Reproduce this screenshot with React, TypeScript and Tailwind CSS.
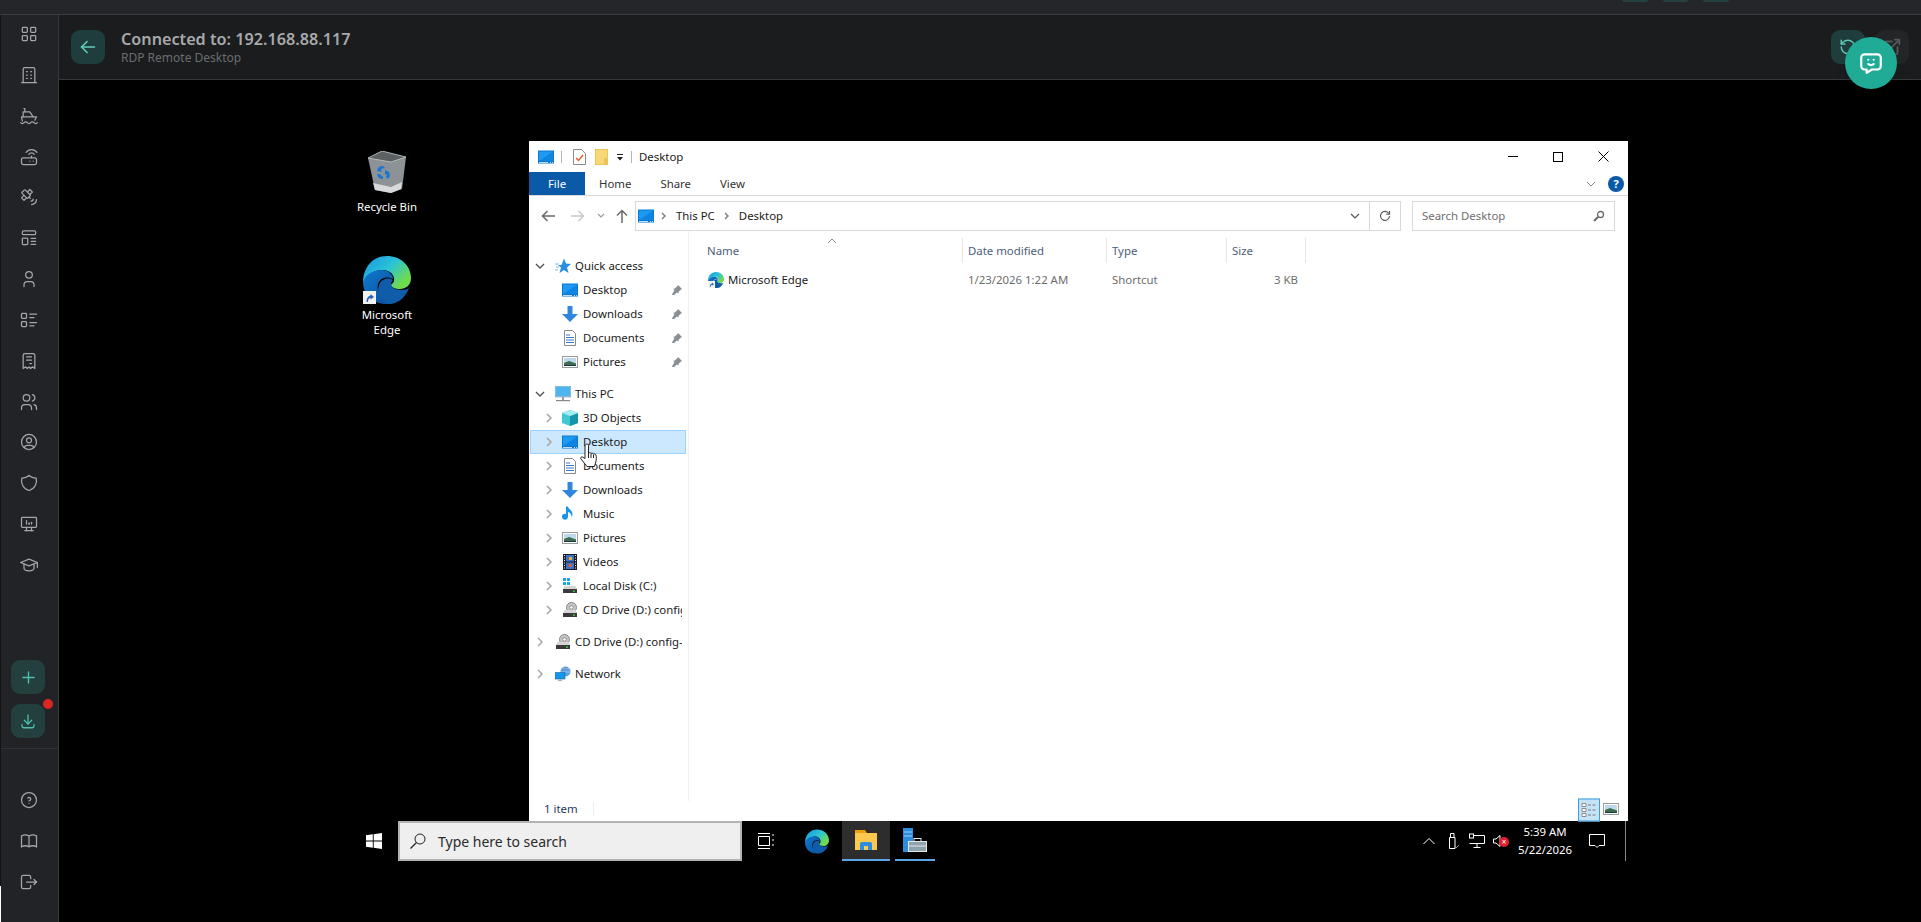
import { RotateCcw } from "lucide-react";
import {
  TbArrowLeft,
  TbBook,
  TbBuilding,
  TbDeviceDesktopAnalytics,
  TbDownload,
  TbExternalLink,
  TbHelpCircle,
  TbLayoutGrid,
  TbListDetails,
  TbLogout,
  TbMessageChatbot,
  TbPlus,
  TbReceipt,
  TbRouter,
  TbSatellite,
  TbSchool,
  TbShield,
  TbShip,
  TbUser,
  TbUserCircle,
  TbUsers,
} from "react-icons/tb";

const win = "font-['Noto_Sans','Open_Sans',sans-serif]";

function LayoutIcon({ size, strokeWidth }: { size?: number; strokeWidth?: number }) {
  return (
    <svg
      viewBox="0 0 24 24"
      width={size}
      height={size}
      fill="none"
      stroke="currentColor"
      strokeWidth={strokeWidth}
      strokeLinecap="round"
      strokeLinejoin="round"
    >
      <rect x="4" y="3.500" width="16" height="4.500" rx="1.500" />
      <rect x="4" y="12" width="6.500" height="8" rx="1" />
      <path d="M14.500 12.500h5.500M14.500 16h5.500M14.500 19.500h5.500" />
    </svg>
  );
}

const navIcons = [
  TbLayoutGrid,
  TbBuilding,
  TbShip,
  TbRouter,
  TbSatellite,
  LayoutIcon,
  TbUser,
  TbListDetails,
  TbReceipt,
  TbUsers,
  TbUserCircle,
  TbShield,
  TbDeviceDesktopAnalytics,
  TbSchool,
];

function MonitorIcon({ className = "w-4 h-4" }: { className?: string }) {
  return (
    <svg viewBox="0 0 16 13" className={className}>
      <rect x="0" y="0" width="16" height="13" fill="#0a78d7" />
      <path d="M1 1h14v9.500H1z" fill="#1e9bf0" />
      <path d="M1 10.500 15 1v9.500z" fill="#0f84e3" />
      <path d="M1 11.500h9v.7H1zM12 11.500h1v.7h-1zM14 11.500h1v.7h-1z" fill="#fff" />
    </svg>
  );
}

function DownArrowIcon() {
  return (
    <svg viewBox="0 0 16 16" className="w-4 h-4">
      <path d="M5.500 0h5v8H16l-8 8-8-8h5.500z" fill="#2f86dc" />
    </svg>
  );
}

function DocIcon() {
  return (
    <svg viewBox="0 0 16 16" className="w-4 h-4">
      <path d="M2.500.5h8l3 3v12h-11z" fill="#fff" stroke="#8a8a8a" />
      <path d="M4 5h4M4 7.500h8M4 10h8M4 12.500h8" stroke="#3a7bc8" />
    </svg>
  );
}

function PictureIcon() {
  return (
    <svg viewBox="0 0 16 14" className="w-4 h-[14px]">
      <rect x="0.5" y="1.500" width="15" height="11" fill="#fff" stroke="#9a9a9a" />
      <rect x="2" y="3" width="12" height="8" fill="#bcd9ef" />
      <path d="M2 8 7 6l7 2.500V11H2z" fill="#3f6b4c" />
      <path d="M2 10h12v1H2z" fill="#1e3a4a" />
    </svg>
  );
}

function CubeIcon() {
  return (
    <svg viewBox="0 0 16 16" className="w-4 h-4">
      <path d="M8 0 16 3v10l-8 3-8-3V3z" fill="#41c6d3" />
      <path d="M8 6v10l8-3V3z" fill="#1795a8" />
      <path d="M8 0 16 3 8 6 0 3z" fill="#a5ecef" />
    </svg>
  );
}

function NoteIcon() {
  return (
    <svg viewBox="0 0 16 16" className="w-4 h-4">
      <path d="M6 .5v10.200a3 3 0 1 1-2-2.800V.5z" fill="#1795ea" />
      <path d="M6 .5c.3 3 4.500 3.500 4.500 7.500 0 1.500-.5 2.500-1 3 .2-2.500-1.500-4.500-3.500-5z" fill="#1795ea" />
    </svg>
  );
}

function FilmIcon() {
  return (
    <svg viewBox="0 0 16 16" className="w-4 h-4">
      <rect x="1" y="0" width="14" height="16" fill="#1b1b2a" />
      <rect x="4" y="1" width="8" height="6.500" fill="#3f72c4" />
      <rect x="4" y="8.500" width="8" height="6.500" fill="#3f72c4" />
      <rect x="7" y="3" width="3" height="3" fill="#e5b13a" />
      <rect x="7" y="10" width="3" height="3" fill="#d3643a" />
      <path d="M2 1.500h1M2 4h1M2 6.500h1M2 9h1M2 11.500h1M2 14h1M13 1.500h1M13 4h1M13 6.500h1M13 9h1M13 11.500h1M13 14h1" stroke="#e8e8e8" />
    </svg>
  );
}

function DiskIcon({ cd }: { cd?: boolean }) {
  return (
    <svg viewBox="0 0 16 16" className="w-4 h-4">
      {cd ? (
        <>
          <circle cx="9.500" cy="5.500" r="5" fill="#c5c5c5" stroke="#8a8a8a" />
          <circle cx="9.500" cy="5.500" r="1.800" fill="#fff" stroke="#8a8a8a" />
        </>
      ) : (
        <>
          <rect x="1" y="0" width="3" height="3" fill="#18a8ee" />
          <rect x="5" y="0" width="3" height="3" fill="#18a8ee" />
          <rect x="1" y="4" width="3" height="3" fill="#18a8ee" />
          <rect x="5" y="4" width="3" height="3" fill="#18a8ee" />
        </>
      )}
      <path d="M2.500 8h11L15 11H1z" fill="#d5d5d5" />
      <rect x="1" y="11" width="14" height="4" fill="#3a3a3a" />
      <rect x="11" y="12.500" width="2" height="1.200" fill="#3fe04b" />
    </svg>
  );
}

function PcIcon() {
  return (
    <svg viewBox="0 0 16 16" className="w-4 h-4">
      <rect x="0" y="0" width="16" height="11" fill="#8fd3f7" stroke="#6f8ea3" strokeWidth="0.6" />
      <path d="M1 1h14v9L1 10z" fill="#4fb4ee" />
      <rect x="7" y="11" width="2" height="3" fill="#999" />
      <rect x="1" y="14" width="14" height="1.200" fill="#888" />
    </svg>
  );
}

function StarIcon() {
  return (
    <svg viewBox="0 0 16 16" className="w-4 h-4">
      <path d="M9 0.500 11 5.500 16 6 12 9.500 13.500 15 9 12 4.500 15 6 9.500 3 7h3.500z" fill="#2a8de0" />
      <path d="M0 6h4M1 9h3M0 12h3" stroke="#7ab9ec" />
    </svg>
  );
}

function NetworkIcon() {
  return (
    <svg viewBox="0 0 16 16" className="w-4 h-4">
      <circle cx="10.500" cy="5.500" r="5" fill="#5f9fdb" />
      <path d="M8 1.500c2 1 4 1 6 1M6 6h9" stroke="#d3e6f6" strokeWidth="0.6" />
      <rect x="0" y="6.500" width="10" height="6.500" fill="#1795ea" stroke="#0a6cbc" strokeWidth="0.6" />
      <rect x="3" y="13.500" width="4" height="1.500" fill="#aaa" />
    </svg>
  );
}

function EdgeLogo({ className }: { className: string }) {
  return (
    <svg viewBox="0 0 48 48" className={className}>
      <defs>
        <linearGradient id="edgeA" x1="0.1" y1="0.1" x2="0.9" y2="0.7">
          <stop offset="0" stopColor="#1a9fe0" />
          <stop offset="0.5" stopColor="#2cc3d6" />
          <stop offset="1" stopColor="#6edb4f" />
        </linearGradient>
        <linearGradient id="edgeB" x1="0" y1="0" x2="1" y2="1">
          <stop offset="0" stopColor="#0f7bd0" />
          <stop offset="1" stopColor="#0c4a96" />
        </linearGradient>
      </defs>
      <path d="M24 0C37 0 48 9 48 22c0 7-5 11-11 11-5 0-9-2-9-4 0-1 2-1 3-4 1-6-4-11-11-11C10 14 2 20 0 27 0 11 10 0 24 0z" fill="url(#edgeA)" />
      <path d="M0 26c2-7 9-12 19-12 6 0 11 4 11 9-5-3-13-2-15 5-2 8 4 17 14 20C9 50 0 38 0 26z" fill="url(#edgeB)" />
      <path d="M16 29c2-6 9-8 14-5-1 1-2 2-2 4 0 3 5 6 11 6 3 0 6-1 7-2-3 9-11 16-20 16-8-2-13-11-10-19z" fill="#0f5cab" />
    </svg>
  );
}

function ShortcutBadge({ className }: { className: string }) {
  return (
    <svg viewBox="0 0 13 13" className={className}>
      <rect width="13" height="13" fill="#f2f2f2" />
      <path d="M3.500 11c0-4 1.500-6 4-6.500V3L11 6 7.500 8.500V7C6 7 5 8.500 5 11z" fill="#2a64b4" />
    </svg>
  );
}

function RecycleBin() {
  return (
    <svg viewBox="0 0 38 42" className="w-[38px] h-[42px]">
      <path d="M0 7 14 0 38 6l-4 32-11 4-16-3z" fill="#8d9296" />
      <path d="M0 7 14 0 38 6 23 11z" fill="#5d6164" stroke="#c3c6c8" strokeWidth="0.8" />
      <path d="M5 32 23 36 34 31l-1 7-10 4-16-3z" fill="#d7d9da" />
      <path d="M9 20a6 6 0 0 1 6-5l2 2-4 1 1 3zM17 19l4 2a6 6 0 0 1-1 7l-2-2 1-3-2 1zM15 28a6 6 0 0 1-6-5l3 0 2 3 1-2z" fill="#1877d4" />
    </svg>
  );
}

function NavRow({
  icon,
  label,
  child,
  open,
  pin,
  active,
}: {
  icon: React.ReactNode;
  label: string;
  child?: boolean;
  open?: boolean;
  pin?: boolean;
  active?: boolean;
}) {
  return (
    <div
      className={`flex h-6 items-center pr-[3px] border ${
        active ? "bg-[#cce8ff] border-[#99d1ff]" : "border-transparent"
      } ${child ? "pl-[12px]" : "pl-[3px]"}`}
    >
      <span className="flex w-[12px] shrink-0 justify-center">
        {open === true && (
          <svg viewBox="0 0 10 10" className="w-[10px] h-[10px]">
            <path d="M1 3l4 4 4-4" fill="none" stroke="#5a5a5a" strokeWidth="1.500" />
          </svg>
        )}
        {open === false && (
          <svg viewBox="0 0 10 10" className="w-[10px] h-[10px]">
            <path d="M3 1l4 4-4 4" fill="none" stroke="#a6a6a6" strokeWidth="1.500" />
          </svg>
        )}
      </span>
      <span className={`flex w-4 shrink-0 justify-center ${child ? "ml-[7px]" : "ml-[9px]"}`}>{icon}</span>
      <span
        className={`flex-1 overflow-hidden whitespace-nowrap text-[11.4px] leading-[16px] text-[#1a1a1a] ${
          child ? "ml-[5px]" : "ml-[4px]"
        }`}
      >
        {label}
      </span>
      {pin && (
        <svg viewBox="0 0 10 10" className="w-[10px] h-[10px] shrink-0">
          <path d="M6 0l4 4-1 .6-2.200 2-.2 2L5 7.500 2 10l-2 0 0-.5L2.500 5 1 3.800l2-.2L5.400 1z" fill="#8a8f93" />
        </svg>
      )}
    </div>
  );
}

export default function App() {
  return (
    <div className="flex h-[922px] w-[1921px] flex-col overflow-hidden bg-black font-['Noto_Sans',sans-serif]">
      {/* top bar, almost scrolled away */}
      <div className="flex h-[15px] shrink-0 justify-end gap-[15px] border-b border-[#3a3c40] bg-[#24262a] pr-[192px]">
        <span className="h-[2px] w-[26px] rounded-b-md bg-[#24403f]" />
        <span className="h-[2px] w-[25px] rounded-b-md bg-[#24403f]" />
        <span className="h-[2px] w-[26px] rounded-b-md bg-[#24403f]" />
      </div>

      <div className="flex min-h-0 flex-1">
        <aside className="relative flex w-[59px] shrink-0 flex-col border-l border-l-[#111214] border-r border-r-[#36383c] bg-[#212327] text-[#a5a6a8]">
          <span className="absolute -left-px bottom-0 h-[36px] w-px bg-white" />
          <div className="flex flex-col gap-[20.85px] pt-[9px] pl-[18px]">
            {navIcons.map((Icon, i) => (
              <Icon key={i} size={20} strokeWidth={1.5} className="shrink-0" />
            ))}
          </div>
          <div className="mt-auto flex flex-col gap-[10px] pl-[10px]">
            <button className="flex h-[34px] w-[34px] items-center justify-center rounded-[9px] bg-[#233f3e] text-[#4fc0aa]">
              <TbPlus size={19} strokeWidth={1.75} />
            </button>
            <button className="relative flex h-[34px] w-[34px] items-center justify-center rounded-[9px] bg-[#233f3e] text-[#4fc0aa]">
              <TbDownload size={18} strokeWidth={1.75} />
              <span className="absolute -right-[8px] -top-[5px] h-[10px] w-[10px] rounded-full bg-[#dc2626]" />
            </button>
          </div>
          <div className="mt-[10px] flex flex-col gap-[20.8px] border-t border-[#303236] pt-[41px] pb-[30px] pl-[18px]">
            <TbHelpCircle size={20} strokeWidth={1.5} />
            <TbBook size={20} strokeWidth={1.5} />
            <TbLogout size={20} strokeWidth={1.5} />
          </div>
        </aside>

        <main className="flex min-w-0 flex-1 flex-col">
          <header className="flex h-[65px] shrink-0 items-center border-b border-[#36383c] bg-[#1a1c1e] pl-[12px] pr-[12px]">
            <button className="flex h-[34px] w-[34px] items-center justify-center rounded-[9px] bg-[#1f3d3c] text-[#5fd0bd]">
              <TbArrowLeft size={22} strokeWidth={1.75} />
            </button>
            <div className="ml-[16px]">
              <div className="text-[16.2px] font-semibold leading-[22px] text-[#a8a9ab]">
                Connected to: 192.168.88.117
              </div>
              <div className="text-[12px] leading-[16px] text-[#6a6c6f]">RDP Remote Desktop</div>
            </div>
            <div className="ml-auto flex gap-[10px]">
              <button className="flex h-[34px] w-[34px] items-center justify-center rounded-[9px] bg-[#1f3d3c] text-[#5cc4b0]">
                <RotateCcw size={18} />
              </button>
              <button className="flex h-[34px] w-[34px] items-center justify-center rounded-[9px] bg-[#232527] text-[#55575a]">
                <TbExternalLink size={22} />
              </button>
            </div>
          </header>

          {/* remote desktop canvas */}
          <div className={`relative min-h-0 flex-1 bg-black ${win}`}>
            <div className="absolute left-[296px] top-[71px] flex w-[64px] flex-col items-center text-center text-[11.4px] leading-[15px] text-white">
              <RecycleBin />
              <span className="mt-[6px]">Recycle Bin</span>
            </div>
            <div className="absolute left-[292px] top-[176px] flex w-[72px] flex-col items-center text-center text-[11.4px] leading-[15px] text-white">
              <div className="relative h-[48px] w-[48px]">
                <EdgeLogo className="h-[48px] w-[48px]" />
                <ShortcutBadge className="absolute bottom-0 left-0 h-[13px] w-[13px]" />
              </div>
              <span className="mt-[3px]">
                Microsoft
                <br />
                Edge
              </span>
            </div>

            {/* explorer window */}
            <div className="absolute left-[470px] top-[61px] flex h-[680px] w-[1099px] flex-col bg-white text-[11.4px] text-[#1a1a1a]">
              <div className="flex h-[31px] shrink-0 items-center pl-[9px]">
                <MonitorIcon />
                <span className="ml-[7px] h-[12px] w-px bg-[#b5b5b5]" />
                <svg viewBox="0 0 13 16" className="ml-[11px] h-4 w-[13px]">
                  <path d="M.5.5h8l4 4v11H.5z" fill="#fff" stroke="#8a8a8a" />
                  <path d="M3 9l2.500 2.500L10 6" fill="none" stroke="#e2582a" strokeWidth="1.400" />
                </svg>
                <svg viewBox="0 0 13 16" className="ml-[9px] h-4 w-[13px]">
                  <rect width="13" height="16" fill="#f8d775" stroke="#e0b13f" />
                  <rect x="9" y="9" width="3" height="6" fill="#e8c25c" />
                </svg>
                <svg viewBox="0 0 8 8" className="ml-[8px] h-2 w-2">
                  <path d="M1 1h6v1H1zM1 4h6L4 7.500z" fill="#222" />
                </svg>
                <span className="ml-[7px] h-[12px] w-px bg-[#b5b5b5]" />
                <span className="ml-[7px]">Desktop</span>
                <div className="ml-auto flex items-center pr-[19px]">
                  <span className="h-px w-[10px] bg-black" />
                  <span className="ml-[35px] h-[10px] w-[10px] border border-black" />
                  <svg viewBox="0 0 11 11" className="ml-[35px] h-[11px] w-[11px]">
                    <path d="M.5.5l10 10M10.500.5l-10 10" stroke="#000" />
                  </svg>
                </div>
              </div>

              <div className="flex h-[24px] shrink-0 items-center border-b border-[#d9d9d9]">
                <span className="flex h-[23px] w-[56px] items-center justify-center bg-[#0a5aa8] text-white">
                  File
                </span>
                <span className="ml-[14px] text-[#333]">Home</span>
                <span className="ml-[29px] text-[#333]">Share</span>
                <span className="ml-[29px] text-[#333]">View</span>
                <div className="ml-auto flex items-center pr-[4px]">
                  <svg viewBox="0 0 10 6" className="h-[6px] w-[10px]">
                    <path d="M1 1l4 4 4-4" fill="none" stroke="#8a8a8a" />
                  </svg>
                  <span className="ml-[12px] flex h-4 w-4 items-center justify-center rounded-full bg-[#0a5aa8] text-[11px] font-bold leading-none text-white">
                    ?
                  </span>
                </div>
              </div>

              <div className="mt-[5px] flex h-[30px] shrink-0 items-center pl-[12px] pr-[13px]">
                <svg viewBox="0 0 14 12" className="h-3 w-[14px]">
                  <path d="M14 6H2M6.500 1 1.500 6l5 5" fill="none" stroke="#6a6a6a" strokeWidth="1.500" />
                </svg>
                <svg viewBox="0 0 14 12" className="ml-[16px] h-3 w-[14px]">
                  <path d="M0 6h12M7.500 1l5 5-5 5" fill="none" stroke="#c8c8c8" strokeWidth="1.500" />
                </svg>
                <svg viewBox="0 0 8 6" className="ml-[12px] h-[6px] w-2">
                  <path d="M1 1l3 3 3-3" fill="none" stroke="#9a9a9a" strokeWidth="1.200" />
                </svg>
                <svg viewBox="0 0 12 14" className="ml-[11px] h-[14px] w-3">
                  <path d="M6 14V2M1 6.500 6 1.500l5 5" fill="none" stroke="#6a6a6a" strokeWidth="1.500" />
                </svg>
                <div className="ml-[7px] flex h-[30px] flex-1 items-center border border-[#d9d9d9]">
                  <span className="ml-[2px]">
                    <MonitorIcon />
                  </span>
                  <svg viewBox="0 0 6 8" className="ml-[7px] h-2 w-[6px]">
                    <path d="M1 1l3 3-3 3" fill="none" stroke="#7a7a7a" strokeWidth="1.400" />
                  </svg>
                  <span className="ml-[9px]">This PC</span>
                  <svg viewBox="0 0 6 8" className="ml-[9px] h-2 w-[6px]">
                    <path d="M1 1l3 3-3 3" fill="none" stroke="#7a7a7a" strokeWidth="1.400" />
                  </svg>
                  <span className="ml-[9px]">Desktop</span>
                  <svg viewBox="0 0 10 6" className="ml-auto mr-[9px] h-[6px] w-[10px]">
                    <path d="M1 1l4 4 4-4" fill="none" stroke="#555" strokeWidth="1.200" />
                  </svg>
                  <span className="h-full w-px bg-[#d9d9d9]" />
                  <svg viewBox="0 0 12 12" className="mx-[9px] h-3 w-3">
                    <path d="M9.800 3.500A4.500 4.500 0 1 0 10.500 6" fill="none" stroke="#555" strokeWidth="1.100" />
                    <path d="M10.500 1v3.200H7.300" fill="none" stroke="#555" strokeWidth="1.100" />
                  </svg>
                </div>
                <div className="ml-[11px] flex h-[30px] w-[203px] items-center border border-[#d9d9d9] pl-[9px] pr-[9px] text-[#6d6d6d]">
                  <span>Search Desktop</span>
                  <svg viewBox="0 0 12 12" className="ml-auto h-3 w-3">
                    <circle cx="7.500" cy="4.500" r="3" fill="none" stroke="#6a6a6a" strokeWidth="1.300" />
                    <path d="M5 7l-4 4" stroke="#6a6a6a" strokeWidth="2" />
                  </svg>
                </div>
              </div>

              <div className="flex min-h-0 flex-1">
                <nav className="relative box-content flex w-[156px] shrink-0 flex-col border-r border-r-[#f0f0f0] pl-px pr-[2px] pt-[23px]">
                  <NavRow open icon={<StarIcon />} label="Quick access" />
                  <NavRow child pin icon={<MonitorIcon />} label="Desktop" />
                  <NavRow child pin icon={<DownArrowIcon />} label="Downloads" />
                  <NavRow child pin icon={<DocIcon />} label="Documents" />
                  <NavRow child pin icon={<PictureIcon />} label="Pictures" />
                  <div className="mt-2">
                    <NavRow open icon={<PcIcon />} label="This PC" />
                  </div>
                  <NavRow child open={false} icon={<CubeIcon />} label="3D Objects" />
                  <NavRow child active open={false} icon={<MonitorIcon />} label="Desktop" />
                  <NavRow child open={false} icon={<DocIcon />} label="Documents" />
                  <NavRow child open={false} icon={<DownArrowIcon />} label="Downloads" />
                  <NavRow child open={false} icon={<NoteIcon />} label="Music" />
                  <NavRow child open={false} icon={<PictureIcon />} label="Pictures" />
                  <NavRow child open={false} icon={<FilmIcon />} label="Videos" />
                  <NavRow child open={false} icon={<DiskIcon />} label="Local Disk (C:)" />
                  <NavRow child open={false} icon={<DiskIcon cd />} label="CD Drive (D:) config-2" />
                  <div className="mt-2">
                    <NavRow open={false} icon={<DiskIcon cd />} label="CD Drive (D:) config-2" />
                  </div>
                  <div className="mt-2">
                    <NavRow open={false} icon={<NetworkIcon />} label="Network" />
                  </div>

                  {/* mouse pointer over the tree */}
                  <svg viewBox="0 0 18 25" className="absolute left-[51px] top-[212px] h-[25px] w-[18px]">
                    <path
                      d="M6 1.500c1-1 2.500-.5 2.500 1V10c1-.6 2-.4 2.500.4.8-.5 2-.3 2.400.6.8-.4 2.100-.1 2.600 1 .5 2 .5 5-.5 8l-1 3.500H7L1 16c-.8-1 0-2.500 1.500-2L5 15.500V3c0-.6.4-1.200 1-1.500z"
                      fill="#fff"
                      stroke="#222"
                    />
                    <path d="M8.500 10v5M11 10.500V15M13.500 11.500V15" stroke="#222" />
                  </svg>
                </nav>

                <section className="min-w-0 flex-1 pl-[12px] pt-[7px]">
                  <div className="relative grid h-[25px] grid-cols-[261px_144px_120px_80px] text-[#4c607a]">
                    <svg viewBox="0 0 10 6" className="absolute left-[126px] top-0 h-[6px] w-[10px]">
                      <path d="M1 5l4-4 4 4" fill="none" stroke="#8a8a8a" />
                    </svg>
                    <span className="flex items-center pl-[6px]">Name</span>
                    <span className="flex items-center border-l border-[#e5e5e5] pl-[5px]">Date modified</span>
                    <span className="flex items-center border-l border-[#e5e5e5] pl-[5px]">Type</span>
                    <span className="flex items-center border-x border-[#e5e5e5] pl-[5px]">Size</span>
                  </div>
                  <div className="mt-[6px] grid h-[22px] grid-cols-[261px_144px_120px_80px] items-center text-[#6d6d6d]">
                    <span className="flex items-center pl-[7px] text-[#1a1a1a]">
                      <span className="relative h-4 w-4">
                        <EdgeLogo className="h-4 w-4" />
                        <ShortcutBadge className="absolute bottom-0 left-0 h-[7px] w-[7px]" />
                      </span>
                      <span className="ml-[4px]">Microsoft Edge</span>
                    </span>
                    <span className="pl-[6px]">1/23/2026 1:22 AM</span>
                    <span className="pl-[6px]">Shortcut</span>
                    <span className="pr-[8px] text-right">3 KB</span>
                  </div>
                </section>
              </div>

              <div className="flex h-[20px] shrink-0 items-center pl-[15px] pr-[9px] text-[#1f3a5f]">
                <span className="-translate-y-[2px]">1 item</span>
                <span className="ml-[15px] h-[14px] w-px -translate-y-[2px] bg-[#eeeeee]" />
                <span className="ml-auto flex h-[23px] w-[22px] -translate-y-[1.500px] items-center justify-center border border-[#3d9be0] bg-[#c5e3f6]">
                  <svg viewBox="0 0 16 15" className="h-[15px] w-4">
                    <path d="M1 1h4v3H1zM1 6h4v3H1zM1 11h4v3H1z" fill="#fff" stroke="#8a8a8a" />
                    <path d="M7 2.500h3M11.500 2.500h3M7 7.500h3M11.500 7.500h3M7 12.500h3M11.500 12.500h3" stroke="#7a7a7a" />
                  </svg>
                </span>
                <span className="ml-[3px] -translate-y-[2px]">
                  <PictureIcon />
                </span>
              </div>
            </div>

            {/* taskbar */}
            <div className="absolute left-[293px] top-[741px] flex h-10 w-[1276px] items-center text-white">
              <svg viewBox="0 0 16 16" className="ml-[14px] h-4 w-4">
                <path d="M0 2.300 6.800 1.300V7.600H0zM7.700 1.200 16 0V7.600H7.700zM0 8.400H6.800V14.700L0 13.700zM7.700 8.400H16V16L7.700 14.800z" fill="#fff" />
              </svg>
              <div className="ml-[16px] flex h-10 w-[344px] items-center border-2 border-[#b3b3b3] bg-[#efefef] pl-[10px] text-[#2b2b2b]">
                <svg viewBox="0 0 16 16" className="h-4 w-4">
                  <circle cx="10" cy="6" r="5" fill="none" stroke="#222" />
                  <path d="M6.500 9.500 0.500 15.500" stroke="#222" strokeWidth="1.300" />
                </svg>
                <span className="ml-[12px] text-[14px]">Type here to search</span>
              </div>
              <svg viewBox="0 0 16 16" className="ml-[16px] h-4 w-4">
                <path d="M.5 3.500h11v9H.5zM0 .5h12M0 15.500h12M14 2h2M14 7h2M14 12h2" fill="none" stroke="#fff" />
              </svg>
              <span className="ml-[31px] flex h-[25px] w-[24px]">
                <EdgeLogo className="h-[25px] w-[24px]" />
              </span>
              <div className="ml-[13px] flex h-10 w-[48px] items-center justify-center border-b-2 border-[#5ca5e4] bg-[#2d2d2d]">
                <svg viewBox="0 0 22 20" className="h-5 w-[22px]">
                  <path d="M0 0h10l2 3H0z" fill="#e8a30f" />
                  <rect y="3" width="22" height="17" fill="#fbc94f" />
                  <path d="M5 20v-6a2 2 0 0 1 2-2h8a2 2 0 0 1 2 2v6z" fill="#2a8de0" />
                  <rect x="9" y="16" width="4" height="4" fill="#fbc94f" />
                </svg>
              </div>
              <div className="ml-[5px] flex h-10 w-[40px] items-center justify-center border-b-2 border-[#5ca5e4]">
                <svg viewBox="0 0 24 24" className="h-6 w-6">
                  <rect x="0" y="0" width="10" height="24" fill="#2a8de0" />
                  <path d="M1 4h8M1 8h8" stroke="#9fd0f5" />
                  <rect x="5.500" y="13.500" width="18" height="10" fill="#8ea3b0" stroke="#e6e6e6" />
                  <rect x="11" y="10.500" width="7" height="3" fill="none" stroke="#e6e6e6" />
                  <path d="M6 18h17" stroke="#e6e6e6" />
                </svg>
              </div>

              <div className="ml-auto flex h-10 items-center">
                <svg viewBox="0 0 12 8" className="h-2 w-3">
                  <path d="M.5 7 6 1.500 11.500 7" fill="none" stroke="#fff" />
                </svg>
                <svg viewBox="0 0 12 16" className="ml-[12px] h-4 w-3">
                  <path d="M2.500 4.500h5.500v11H2.500zM3.500 4.500V.5h3.500v4" fill="none" stroke="#fff" />
                  <path d="M7 13l2 2 3-3" fill="none" stroke="#999" />
                </svg>
                <svg viewBox="0 0 16 16" className="ml-[10px] h-4 w-4">
                  <path d="M4 2.500h11.500v8H.5M8 10.500v4M4.500 14.500h7" fill="none" stroke="#fff" />
                  <rect x=".5" y="1" width="4" height="4" fill="none" stroke="#fff" />
                </svg>
                <span className="relative ml-[8px] h-4 w-[16px]">
                  <svg viewBox="0 0 8 12" className="absolute left-0 top-[2px] h-3 w-2">
                    <path d="M.5 4h2.500L7 .5v11L3 8H.5z" fill="none" stroke="#fff" />
                  </svg>
                  <span className="absolute left-[6px] top-[4px] flex h-[10px] w-[10px] items-center justify-center rounded-full bg-[#e02030] text-[8px] leading-none text-white">
                    ×
                  </span>
                </span>
                <div className="ml-px w-[70px] text-center text-[11.4px] leading-[18px]">
                  <div>5:39 AM</div>
                  <div>5/22/2026</div>
                </div>
                <svg viewBox="0 0 16 16" className="ml-[9px] h-4 w-4">
                  <path d="M.5 1.500h15v11H10l-2 2-2-2H.5z" fill="none" stroke="#fff" />
                </svg>
                <span className="ml-[20px] mr-[2px] h-10 w-px bg-[#888888]" />
              </div>
            </div>

            {/* chat launcher */}
            <button className="absolute left-[1786px] -top-[43px] flex h-[52px] w-[52px] items-center justify-center rounded-full bg-[#1fab95] text-white shadow-lg">
              <TbMessageChatbot size={26} />
            </button>
          </div>
        </main>
      </div>
    </div>
  );
}
